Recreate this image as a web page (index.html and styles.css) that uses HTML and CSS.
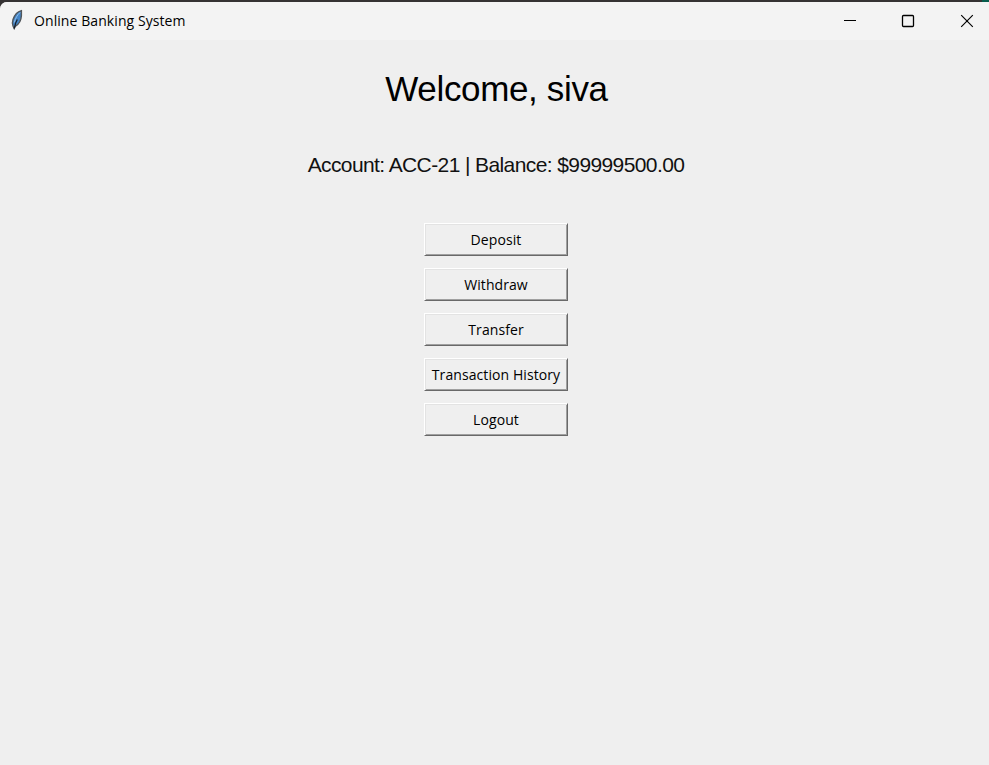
FILE: index.html
```html
<!DOCTYPE html>
<html lang="en">
<head>
<meta charset="utf-8">
<title>Online Banking System</title>
<link rel="stylesheet" href="styles.css">
</head>
<body>
<div class="window">
  <header class="titlebar">
    <svg class="feather" width="14" height="22" viewBox="0 0 14 22">
      <path d="M11.400 1.600C8 2.400 4.600 5.800 3 10.500C2.200 13 2 15 3 17L4.200 19.500L5.200 17.300C8.600 15.500 11.200 11 11.400 6.500Z" fill="#4385c8" stroke="#50555a" stroke-width="1.400"/>
      <path d="M10 3.500C7.300 6 5.200 9.500 4.300 13.500" fill="none" stroke="#8dbce8" stroke-width="1"/>
      <path d="M7.300 10.500C6 12.500 5 15 4.300 19.500" fill="none" stroke="#17202b" stroke-width="1.300"/>
    </svg>
    <span class="title">Online Banking System</span>
    <div class="controls">
      <svg width="14" height="14" viewBox="0 0 14 14"><path d="M1 6.500H13" stroke="#000"/></svg>
      <svg width="14" height="14" viewBox="0 0 14 14"><rect x="1.500" y="1.500" width="11" height="11" rx="1" fill="none" stroke="#000" stroke-width="1.300"/></svg>
      <svg width="14" height="14" viewBox="0 0 14 14"><path d="M1.200 1.200L12.800 12.800M12.800 1.200L1.200 12.800" stroke="#000" stroke-width="1.150"/></svg>
    </div>
  </header>
  <main class="content">
    <h1 class="welcome">Welcome, siva</h1>
    <p class="account">Account: ACC-21 | Balance: $99999500.00</p>
    <div class="actions">
      <button class="action">Deposit</button>
      <button class="action">Withdraw</button>
      <button class="action">Transfer</button>
      <button class="action">Transaction History</button>
      <button class="action">Logout</button>
    </div>
  </main>
</div>
</body>
</html>
```
FILE: styles.css
```css
* { box-sizing: border-box; }
body {
  margin: 0;
  height: 765px;
  padding-top: 2px;
  overflow: hidden;
  background: linear-gradient(90deg, #353233 982px, #075c4c 982px);
}
.window {
  height: 763px;
  background: #efefef;
  border-top-left-radius: 7px;
  overflow: hidden;
}
.titlebar {
  display: flex;
  align-items: center;
  height: 38px;
  padding: 0 15px 0 10px;
  background: #f3f3f3;
}
.feather { margin-top: -2px; }
.title {
  margin-left: 10px;
  font: 14px/20px "Open Sans", sans-serif;
  letter-spacing: 0.08px;
  color: #000;
}
.controls {
  display: flex;
  gap: 45px;
  margin-left: auto;
}
.controls svg:first-child { margin-right: -1px; }
.content {
  display: flex;
  flex-direction: column;
  align-items: center;
  padding-left: 3px;
}
.welcome {
  margin: 29px 0 0 1px;
  font: 35px/40px "Liberation Sans", Arial, sans-serif;
  letter-spacing: -0.35px;
  color: #000;
}
.account {
  margin: 44px 0 0;
  font: 21px/24px "Liberation Sans", Arial, sans-serif;
  letter-spacing: -0.6px;
  white-space: nowrap;
  color: #111;
}
.actions {
  display: flex;
  flex-direction: column;
  gap: 12px;
  margin-top: 46px;
}
.action {
  width: 144px;
  height: 33px;
  padding: 0;
  border: 1px solid;
  border-color: #fff #696969 #696969 #fff;
  box-shadow: inset 1px 1px #e3e3e3, inset -1px -1px #a0a0a0;
  background: #efefef;
  font: 14px/20px "Open Sans", sans-serif;
  letter-spacing: 0.08px;
  color: #000;
  white-space: nowrap;
}
```
